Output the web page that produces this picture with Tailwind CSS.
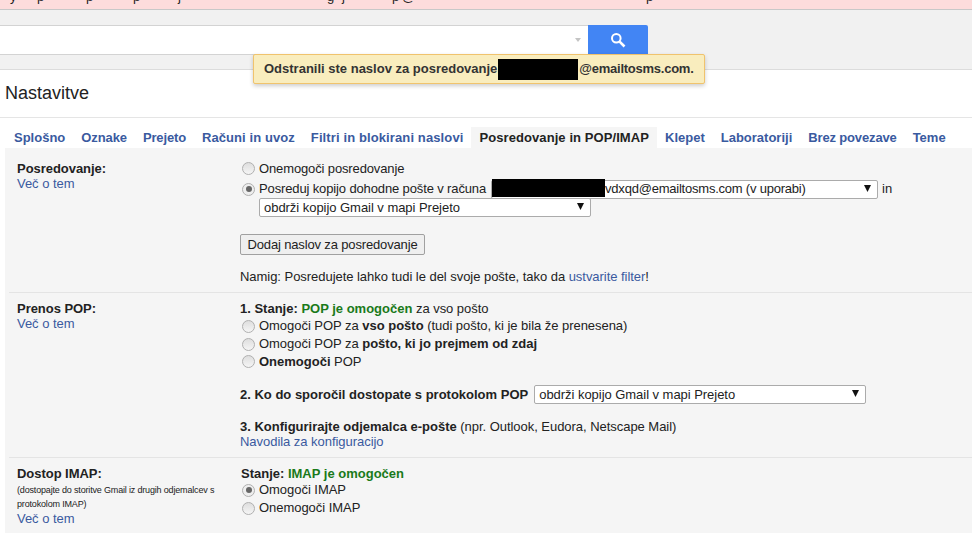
<!doctype html>
<html lang="sl">
<head>
<meta charset="utf-8">
<script src="https://cdn.jsdelivr.net/npm/@tailwindcss/browser@4"></script>
</head>
<body class="m-0 h-[533px] w-[972px] overflow-hidden bg-white font-['Liberation_Sans',Arial,sans-serif] text-[13px] text-[#222]">
<div class="relative h-[533px] w-[972px] overflow-hidden">
  <!-- warning strip: only the descenders of its cut-off line show -->
  <div class="h-[10px] overflow-hidden border-b border-[#c8c8c8] bg-[#fddcdc]">
    <div class="mt-[-11px] flex whitespace-nowrap text-[13px] leading-[15px] text-[#222]"><span class="ml-[10px]">y</span><span class="ml-[20.5px]">p</span><span class="ml-[41.8px]">p</span><span class="ml-[39.8px]">p</span><span class="ml-[37.8px]">j</span><span class="ml-[146px]">g</span><span class="ml-[7.8px]">j</span><span class="ml-[47px]">p</span><span class="ml-[2.8px]">@</span><span class="ml-[230.8px]">p</span></div>
  </div>
  <!-- search header -->
  <div class="h-[60px] border-b border-[#dcdcdc] bg-[#f1f1f1] pt-[15px]">
    <div class="flex h-[30px] w-[648px]">
      <div class="flex h-[30px] w-[588px] items-center justify-end border-y border-[#d3d3d3] bg-white pr-[7px]">
        <span class="h-0 w-0 border-x-[3.5px] border-t-[4px] border-x-transparent border-t-[#c4c4c4]"></span>
      </div>
      <div class="flex h-[30px] w-[60px] items-center justify-center rounded-tr-[2px] bg-[#4285f4] pb-[1px]">
        <svg width="16" height="16" viewBox="0 0 16 16" fill="none" stroke="#fff"><circle cx="6.3" cy="6.3" r="4.3" stroke-width="2"/><path d="M9.6 9.6 14.5 14.5" stroke-width="2.6"/></svg>
      </div>
    </div>
  </div>
  <!-- title -->
  <div class="flex h-[48px] items-center border-b border-[#e5e5e5] pl-[5px] text-[18px] text-[#222]">Nastavitve</div>
  <!-- tabs -->
  <div class="flex h-[30px] items-end pl-[5px] text-[13px] font-bold text-[#3a5a9f]">
    <a class="flex h-[21px] items-center pl-[9px] pr-[8px]">Splošno</a>
    <a class="flex h-[21px] items-center px-[8px] tracking-[-0.1px]">Oznake</a>
    <a class="flex h-[21px] items-center px-[8px] tracking-[-0.15px]">Prejeto</a>
    <a class="flex h-[21px] items-center px-[8px] tracking-[0.08px]">Računi in uvoz</a>
    <a class="flex h-[21px] items-center px-[8px] tracking-[0.115px]">Filtri in blokirani naslovi</a>
    <a class="flex h-[21px] items-center bg-[#f5f5f5] px-[8px] tracking-[0.08px] text-[#222]">Posredovanje in POP/IMAP</a>
    <a class="flex h-[21px] items-center px-[8px]">Klepet</a>
    <a class="flex h-[21px] items-center px-[8px]">Laboratoriji</a>
    <a class="flex h-[21px] items-center px-[8px] tracking-[-0.15px]">Brez povezave</a>
    <a class="flex h-[21px] items-center px-[8px]">Teme</a>
  </div>
  <!-- panel -->
  <div class="ml-[5px] h-[385px] bg-[#f5f5f5] pl-[4px] tracking-[-0.04px]">
    <!-- forwarding -->
    <section class="flex h-[145px] border-b border-[#e4e4e4] pt-[13px]">
      <div class="w-[231px] pl-[8px] leading-[15px]">
        <div class="font-bold">Posredovanje:</div>
        <a class="text-[#3a5a9f]">Več o tem</a>
      </div>
      <div>
        <div class="flex h-[15px] items-center"><span class="ml-[2px] mr-[4px] h-[13px] w-[13px] rounded-full border border-[#b0b0b0] bg-gradient-to-b from-[#dedede] to-[#f5f5f5]"></span><span class="tracking-[-0.13px]">Onemogoči posredovanje</span></div>
        <div class="mt-[4px] flex h-[18px] items-center">
          <span class="relative ml-[2px] mr-[4px] h-[13px] w-[13px] rounded-full border border-[#b0b0b0] bg-[#eee]"><span class="absolute left-[2.5px] top-[2.5px] h-[6px] w-[6px] rounded-full bg-[#666]"></span></span>
          <span class="tracking-[-0.13px]">Posreduj kopijo dohodne pošte v računa</span>
          <div class="relative ml-[5px] flex h-[19px] w-[387px] items-center rounded-[2px] border border-[#ababab] bg-white pl-[113px] tracking-[-0.22px]">vdxqd@emailtosms.com (v uporabi)
            <span class="absolute right-[5px] top-[4px] text-[0px]"><svg width="9" height="7" viewBox="0 0 9 7"><path d="M1 0h7L4.5 7z" fill="#111"/></svg></span>
            <span class="absolute left-0 top-[-2px] h-[18px] w-[113px] bg-black"></span>
          </div>
          <span class="ml-[4px]">in</span>
        </div>
        <div class="relative ml-[19px] flex h-[19px] w-[332px] items-center rounded-[2px] border border-[#ababab] bg-white pl-[4px]">obdrži kopijo Gmail v mapi Prejeto
          <span class="absolute right-[5px] top-[4px] text-[0px]"><svg width="9" height="7" viewBox="0 0 9 7"><path d="M1 0h7L4.5 7z" fill="#111"/></svg></span>
        </div>
        <button class="mt-[17px] block h-[21px] w-[185px] rounded-[2px] border border-[#a0a0a0] bg-[#efefef] text-center tracking-[-0.15px]">Dodaj naslov za posredovanje</button>
        <div class="mt-[14px] leading-[15px]">Namig: Posredujete lahko tudi le del svoje pošte, tako da <a class="text-[#3a5a9f]">ustvarite filter</a>!</div>
      </div>
    </section>
    <!-- POP -->
    <section class="flex h-[165px] border-b border-[#e4e4e4] pt-[8px]">
      <div class="w-[231px] pl-[8px] leading-[15px]">
        <div class="font-bold">Prenos POP:</div>
        <a class="text-[#3a5a9f]">Več o tem</a>
      </div>
      <div>
        <div class="h-[15px] leading-[15px]"><b class="tracking-normal">1. Stanje:</b> <b class="tracking-normal text-[#1a7a1a]">POP je omogočen</b> za vso pošto</div>
        <div class="mt-[1px] flex h-[18px] items-center"><span class="ml-[2px] mr-[4px] h-[13px] w-[13px] rounded-full border border-[#b0b0b0] bg-gradient-to-b from-[#dedede] to-[#f5f5f5]"></span><span>Omogoči POP za <b class="tracking-normal">vso pošto</b> (tudi pošto, ki je bila že prenesena)</span></div>
        <div class="flex h-[18px] items-center"><span class="ml-[2px] mr-[4px] h-[13px] w-[13px] rounded-full border border-[#b0b0b0] bg-gradient-to-b from-[#dedede] to-[#f5f5f5]"></span><span>Omogoči POP za <b class="tracking-normal">pošto, ki jo prejmem od zdaj</b></span></div>
        <div class="flex h-[17px] items-center"><span class="ml-[2px] mr-[4px] h-[13px] w-[13px] rounded-full border border-[#b0b0b0] bg-gradient-to-b from-[#dedede] to-[#f5f5f5]"></span><span><b class="tracking-normal">Onemogoči</b> POP</span></div>
        <div class="mt-[15px] flex h-[19px] items-center">
          <b class="tracking-normal">2. Ko do sporočil dostopate s protokolom POP</b>
          <div class="relative ml-[6px] flex h-[19px] w-[332px] items-center rounded-[2px] border border-[#ababab] bg-white pl-[4px]">obdrži kopijo Gmail v mapi Prejeto
            <span class="absolute right-[5px] top-[4px] text-[0px]"><svg width="9" height="7" viewBox="0 0 9 7"><path d="M1 0h7L4.5 7z" fill="#111"/></svg></span>
          </div>
        </div>
        <div class="mt-[15px] leading-[15px]"><b class="tracking-normal">3. Konfigurirajte odjemalca e-pošte</b> (npr. Outlook, Eudora, Netscape Mail)</div>
        <a class="block leading-[15px] text-[#3a5a9f]">Navodila za konfiguracijo</a>
      </div>
    </section>
    <!-- IMAP -->
    <section class="flex pt-[8px]">
      <div class="w-[231px] pl-[8px]">
        <div class="font-bold leading-[15px]">Dostop IMAP:</div>
        <div class="mt-[2px] w-[205px] text-[9px] leading-[14px] tracking-[-0.17px]">(dostopajte do storitve Gmail iz drugih odjemalcev s protokolom IMAP)</div>
        <a class="block leading-[15px] text-[#3a5a9f]">Več o tem</a>
      </div>
      <div>
        <div class="h-[15px] pl-[1px] leading-[15px]"><b class="tracking-normal">Stanje:</b> <b class="tracking-normal text-[#1a7a1a]">IMAP je omogočen</b></div>
        <div class="flex h-[18px] items-center"><span class="relative ml-[2px] mr-[4px] h-[13px] w-[13px] rounded-full border border-[#b0b0b0] bg-[#eee]"><span class="absolute left-[2.5px] top-[2.5px] h-[6px] w-[6px] rounded-full bg-[#666]"></span></span>Omogoči IMAP</div>
        <div class="flex h-[18px] items-center"><span class="ml-[2px] mr-[4px] h-[13px] w-[13px] rounded-full border border-[#b0b0b0] bg-gradient-to-b from-[#dedede] to-[#f5f5f5]"></span>Onemogoči IMAP</div>
      </div>
    </section>
  </div>
  <!-- toast -->
  <div class="absolute left-[253px] top-[54px] flex h-[30px] w-[452px] items-center rounded-[2px] border border-[#f0c36d] bg-[#f9edbe] pl-[10px] font-bold text-[13px] text-[#333] shadow-[0_2px_4px_rgba(0,0,0,0.2)]">
    Odstranili ste naslov za posredovanje<span class="mx-[1px] h-[21px] w-[80px] bg-black"></span><span class="tracking-[-0.25px]">@emailtosms.com.</span>
  </div>
</div>
</body>
</html>
